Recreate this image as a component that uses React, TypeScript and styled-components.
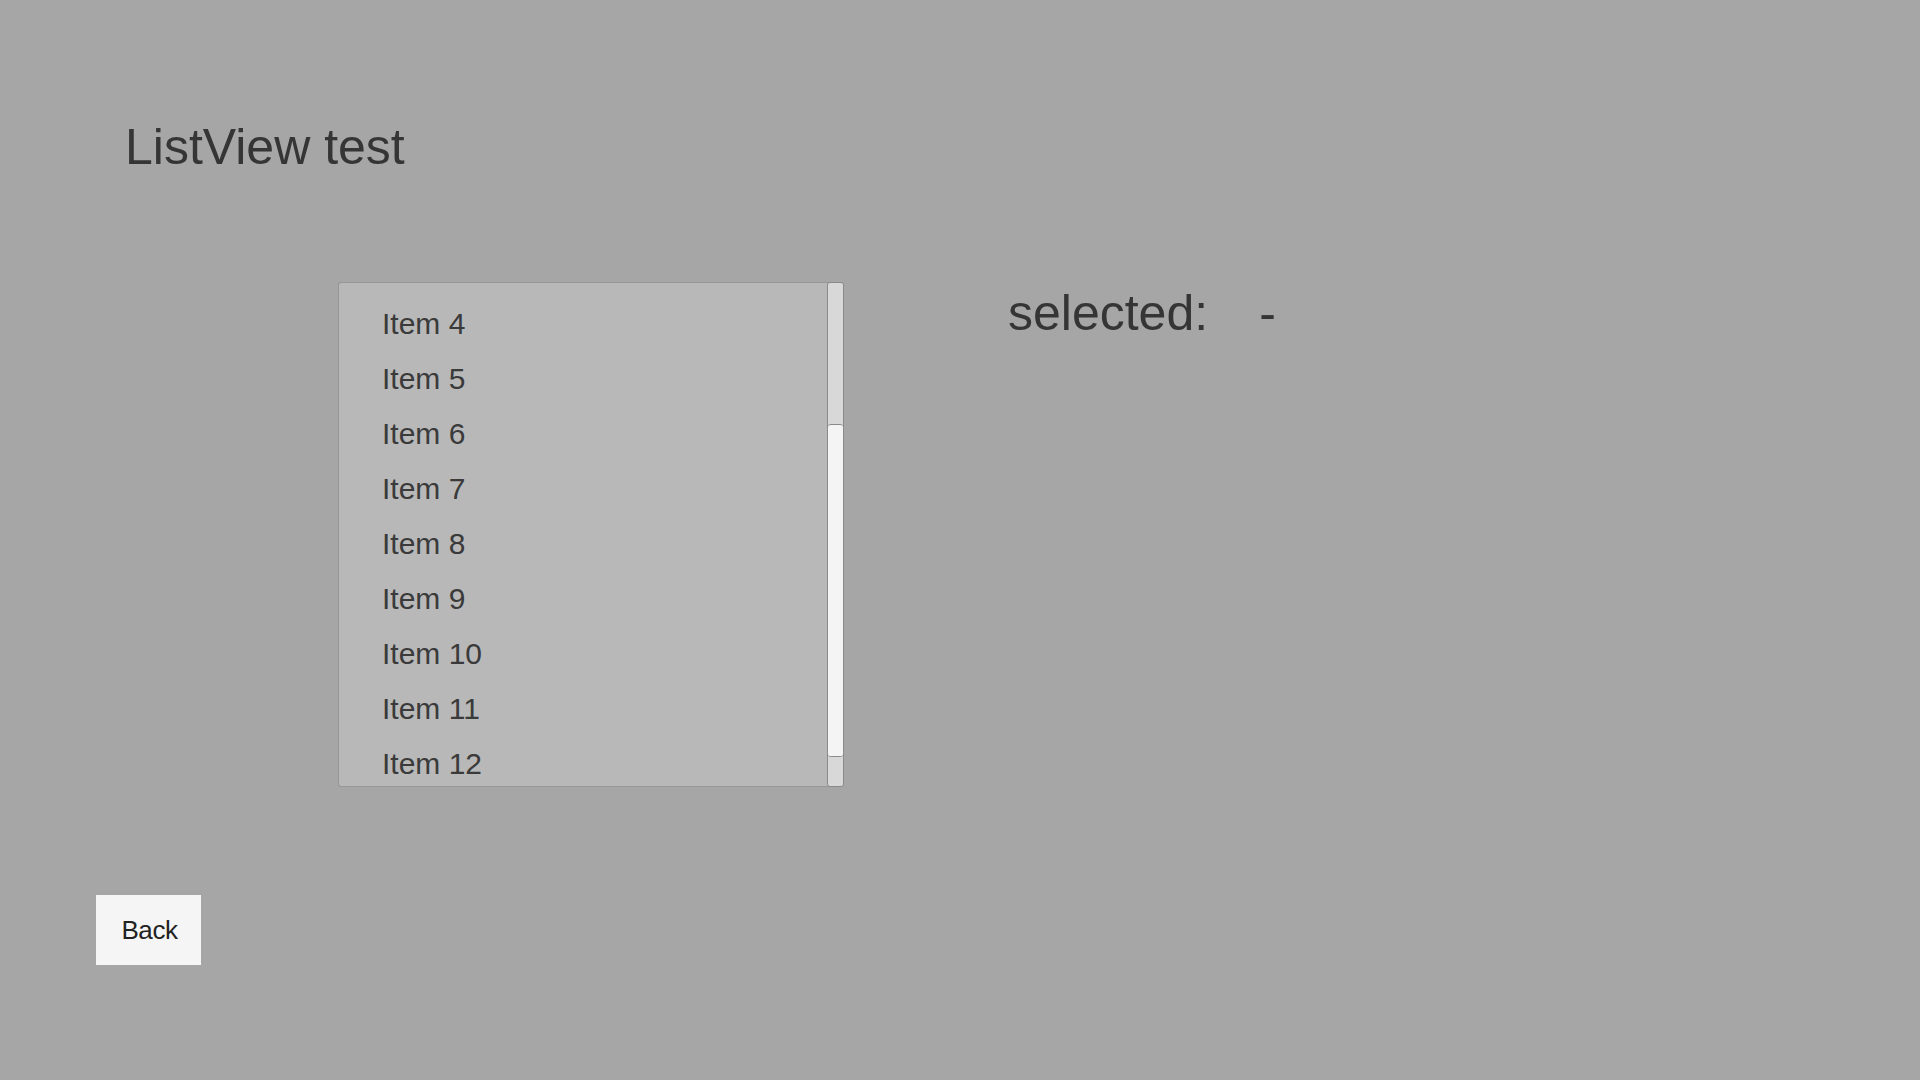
import React from "react";
import styled, { createGlobalStyle } from "styled-components";

const GlobalStyle = createGlobalStyle`
  html, body {
    margin: 0;
    padding: 0;
    background: #a6a6a6;
  }
  body {
    font-family: "Liberation Sans", Arial, sans-serif;
    color: #353535;
  }
`;

const Page = styled.div`
  width: 1920px;
  height: 1080px;
  background: #a6a6a6;
  display: flex;
  flex-direction: column;
  overflow: hidden;
`;

const Title = styled.h1`
  margin: 122px 0 0 125px;
  font-size: 50px;
  line-height: 50px;
  font-weight: 400;
  color: #353535;
`;

const ContentRow = styled.div`
  display: flex;
  align-items: flex-start;
  margin: 110px 0 0 338px;
`;

const ListBox = styled.div`
  width: 506px;
  height: 505px;
  box-sizing: border-box;
  display: flex;
  background: #b8b8b8;
  border: 1px solid #979797;
  border-right: none;
  border-radius: 3px;
`;

const Viewport = styled.div`
  flex: 1;
  overflow: hidden;
  padding: 13px 0 0 43px;
`;

const Row = styled.div`
  height: 55px;
  line-height: 55px;
  font-size: 30px;
  color: #3a3a3a;
  white-space: nowrap;
`;

const ScrollTrack = styled.div`
  width: 17px;
  margin: -1px 0;
  box-sizing: border-box;
  border: 1px solid #8a8a8a;
  border-radius: 3px;
  background: #d8d8d8;
  display: flex;
  flex-direction: column;
  overflow: hidden;
`;

const ScrollSpacer = styled.div<{ $h: number }>`
  height: ${(p) => p.$h}px;
  flex-shrink: 0;
`;

const ScrollThumb = styled.div<{ $h: number }>`
  height: ${(p) => p.$h}px;
  flex-shrink: 0;
  background: #f4f4f4;
  border-top: 1px solid #8a8a8a;
  border-bottom: 1px solid #8a8a8a;
  border-radius: 3px;
  box-sizing: border-box;
`;

const SelectedInfo = styled.div`
  display: flex;
  gap: 51px;
  margin: 6px 0 0 164px;
  font-size: 50px;
  line-height: 50px;
  color: #353535;
`;

const Footer = styled.div`
  margin: 108px 0 0 96px;
`;

const BackButton = styled.button`
  width: 105px;
  height: 70px;
  border: none;
  padding: 0;
  background: #f5f5f5;
  font-family: "Liberation Sans", Arial, sans-serif;
  font-size: 26px;
  letter-spacing: -0.4px;
  color: #222222;
  cursor: pointer;
  display: flex;
  align-items: center;
  justify-content: center;
  padding-left: 2px;
`;

const items = [4, 5, 6, 7, 8, 9, 10, 11, 12];

export default function App() {
  return (
    <>
      <GlobalStyle />
      <Page>
        <Title>ListView test</Title>
        <ContentRow>
          <ListBox>
            <Viewport>
              {items.map((n) => (
                <Row key={n}>Item {n}</Row>
              ))}
            </Viewport>
            <ScrollTrack>
              <ScrollSpacer $h={141} />
              <ScrollThumb $h={333} />
            </ScrollTrack>
          </ListBox>
          <SelectedInfo>
            <span>selected:</span>
            <span>-</span>
          </SelectedInfo>
        </ContentRow>
        <Footer>
          <BackButton>Back</BackButton>
        </Footer>
      </Page>
    </>
  );
}
